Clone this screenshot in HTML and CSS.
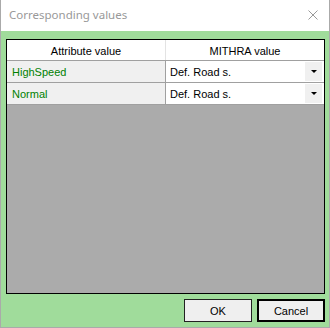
FILE: index.html
```html
<!DOCTYPE html>
<html lang="en">
<head>
    <meta charset="UTF-8">
    <title>Corresponding values</title>
    <link rel="stylesheet" href="styles.css">
</head>
<body>

<div class="window">
    <div class="titlebar">
        <span class="title">Corresponding values</span>
        <svg class="close" width="10" height="10" viewBox="0 0 10 10">
            <path d="M0.5 0.5 L9.5 9.5 M9.5 0.5 L0.5 9.5" stroke="#999" stroke-width="1" fill="none"/>
        </svg>
    </div>

    <div class="client">
        <div class="grid">
            <div class="row header">
                <div class="cell">Attribute value</div>
                <div class="cell">MITHRA value</div>
            </div>
            <div class="row">
                <div class="cell key">HighSpeed</div>
                <div class="cell combo">
                    <span>Def. Road s.</span>
                    <span class="drop"><span class="arrow"></span></span>
                </div>
            </div>
            <div class="row">
                <div class="cell key">Normal</div>
                <div class="cell combo">
                    <span>Def. Road s.</span>
                    <span class="drop"><span class="arrow"></span></span>
                </div>
            </div>
        </div>

        <div class="buttons">
            <button>OK</button>
            <button class="default">Cancel</button>
        </div>
    </div>
</div>

</body>
</html>
```

FILE: styles.css
```css
body {
    margin: 0;
    font-family: 'Liberation Sans', Arial, sans-serif;
    font-size: 11px;
}
.window {
    width: 330px;
    height: 328px;
    box-sizing: border-box;
    border: 1px solid #aaaaaa;
    border-top: none;
    display: flex;
    flex-direction: column;
    background: white;
}
.titlebar {
    height: 31px;
    display: flex;
    align-items: center;
    justify-content: space-between;
    padding: 0 11px 2px 8px;
    box-sizing: border-box;
}
.title {
    font-family: 'Noto Sans', 'Open Sans', sans-serif;
    font-size: 11.5px;
    color: #999999;
}
.client {
    flex: 1;
    background: #a0dc9b; /* green client area */
    padding: 8px 4px 5px 5px;
    display: flex;
    flex-direction: column;
}
.grid {
    height: 255px;
    box-sizing: border-box;
    border: 1px solid black;
    background: #ababab;
}
.row {
    display: flex;
    height: 22px;
    box-sizing: border-box;
    border-bottom: 1px solid #a0a0a0;
}
.row.header {
    height: 21px;
    background: white;
}
.cell {
    width: 158px;
    display: flex;
    align-items: center;
    box-sizing: border-box;
}
.cell:first-child {
    width: 159px;
    border-right: 1px solid #a0a0a0;
}
.header .cell {
    justify-content: center;
    padding-top: 1px;
}
.header .cell:first-child {
    border-right-color: #e3e3e3;
}
.key {
    background: #f0f0f0;
    color: #008000;
    padding-left: 5px;
}
.combo {
    background: white;
    padding-left: 4px;
    justify-content: space-between;
}
.drop {
    width: 17px;
    height: 19px;
    margin-right: 2px;
    background: #f0f0f0;
    display: flex;
    align-items: center;
    justify-content: center;
}
.arrow {
    width: 0;
    height: 0;
    border-left: 3px solid transparent;
    border-right: 3px solid transparent;
    border-top: 3px solid black;
}
.buttons {
    margin-top: 5px;
    display: flex;
    justify-content: flex-end;
    gap: 5px;
}
button {
    width: 68px;
    height: 23px;
    font-family: 'Liberation Sans', Arial, sans-serif;
    font-size: 11px;
    background: #efefef;
    border: 1px solid #222;
    padding: 0;
}
button.default {
    border: 2px solid black;
}
```
